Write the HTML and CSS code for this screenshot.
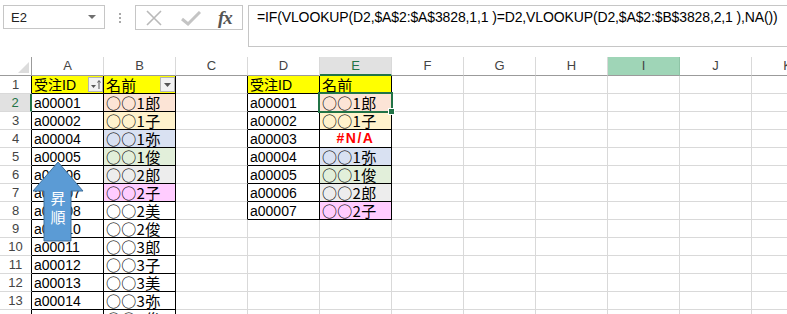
FILE: index.html
```html
<!DOCTYPE html>
<html lang="ja">
<head>
  <meta charset="UTF-8">
  <title>VLOOKUP 昇順</title>
  <link rel="stylesheet" href="styles.css">
</head>
<body>
  <div class="bar">
    <div class="namebox"><span>E2</span><span class="caret"></span></div>
    <div class="grip"><i></i><i></i><i></i></div>
    <div class="fxbox">
      <svg class="ico-x" width="18" height="16" viewBox="0 0 18 16"><path d="M2 1 L16 15 M16 1 L2 15" stroke="#b9b9b9" stroke-width="1.6" fill="none"/></svg>
      <svg class="ico-ok" width="20" height="15" viewBox="0 0 20 15"><path d="M1 8 L7 13 L19 1" stroke="#c4c4c4" stroke-width="3" fill="none"/></svg>
      <span class="fx">fx</span>
    </div>
    <div class="formula">=IF(VLOOKUP(D2,$A$2:$A$3828,1,1 )=D2,VLOOKUP(D2,$A$2:$B$3828,2,1 ),NA())</div>
  </div>

  <div class="sheet" id="sheet">
    <svg class="arrow" width="54" height="84" viewBox="0 0 54 84">
      <path d="M27 2 L52 31 L40 31 L40 81 L13 81 L13 31 L2 31 Z" fill="#5b9bd5" stroke="#41719c" stroke-width="1"/>
      <text x="27" y="37" class="arrow-text">昇</text>
      <text x="27" y="56" class="arrow-text">順</text>
    </svg>
  </div>

  <script>
    const cols = ["A", "B", "C", "D", "E", "F", "G", "H", "I", "J", "K"];

    const left = [
      ["受注ID", "名前", "yel"],
      ["a00001", "○○1郎", "peach"], ["a00002", "○○1子", "cream"], ["a00004", "○○1弥", "blue"],
      ["a00005", "○○1俊", "green"], ["a00006", "○○2郎", "grey"], ["a00007", "○○2子", "pink"],
      ["a00008", "○○2美", ""], ["a00010", "○○2俊", ""], ["a00011", "○○3郎", ""],
      ["a00012", "○○3子", ""], ["a00013", "○○3美", ""], ["a00014", "○○3弥", ""],
      ["a00015", "○○3俊", ""]
    ];

    const right = [
      ["受注ID", "名前", "yel"],
      ["a00001", "○○1郎", "peach"], ["a00002", "○○1子", "cream"], ["a00003", "#N/A", "na"],
      ["a00004", "○○1弥", "blue"], ["a00005", "○○1俊", "green"], ["a00006", "○○2郎", "grey"],
      ["a00007", "○○2子", "pink"]
    ];

    const sheet = document.getElementById("sheet");

    function addCell(text, cls) {
      const el = document.createElement("div");
      el.className = cls;
      if (text) el.textContent = text;
      sheet.appendChild(el);
      return el;
    }

    function filterBtn(sorted) {
      const b = document.createElement("span");
      b.className = "fbtn";
      b.innerHTML = sorted
        ? '<svg width="13" height="13" viewBox="0 0 13 13"><path d="M2 7 L7 7 L4.5 10 Z" fill="#555"/><path d="M10 3 L10 11 M8.5 4.5 L10 2.5 L11.5 4.5" stroke="#555" stroke-width="1" fill="none"/></svg>'
        : '<svg width="13" height="13" viewBox="0 0 13 13"><path d="M3 5 L10 5 L6.5 9 Z" fill="#555"/></svg>';
      return b;
    }

    // header row
    addCell("", "corner");
    cols.forEach(c => {
      let cls = "ch";
      if (c === "E") cls += " sel";
      if (c === "I") cls += " hi";
      addCell(c, cls);
    });

    for (let r = 1; r <= 14; r++) {
      addCell(String(r), r === 2 ? "rh sel" : "rh");

      const L = left[r - 1];
      const a = addCell(L[0], "cell tb id" + (r === 1 ? " yel hd" : ""));
      const b = addCell(L[1], "cell tb name " + L[2] + (r === 1 ? " hd" : ""));
      if (r === 1) {
        a.appendChild(filterBtn(true));
        b.appendChild(filterBtn(false));
      }

      addCell("", r <= 8 ? "cell edge" : "cell");

      const R = right[r - 1];
      if (R) {
        addCell(R[0], "cell tb id" + (r === 1 ? " yel" : ""));
        addCell(R[1], "cell tb name " + R[2] + (r === 2 ? " cur" : ""));
      } else {
        addCell("", "cell");
        addCell("", "cell");
      }

      for (let i = 5; i < cols.length; i++) addCell("", "cell");
    }
  </script>
</body>
</html>
```

FILE: styles.css
```css
html, body {
  margin: 0;
  width: 787px;
  height: 314px;
  overflow: hidden;
  background: #fff;
}
body {
  font-family: "Liberation Sans", "Noto Sans CJK JP", sans-serif;
  color: #000;
}

/* formula bar */
.bar {
  height: 57px;
  box-sizing: border-box;
  padding: 5px 0 0 3px;
  display: flex;
  align-items: flex-start;
}
.namebox {
  width: 102px;
  height: 24px;
  box-sizing: border-box;
  border: 1px solid #c6c6c6;
  display: flex;
  align-items: center;
  justify-content: space-between;
  padding: 0 8px 0 7px;
  font-size: 13px;
  color: #222;
}
.caret {
  width: 0;
  height: 0;
  border-left: 4px solid transparent;
  border-right: 4px solid transparent;
  border-top: 4px solid #6f6f6f;
}
.grip {
  width: 30px;
  display: flex;
  flex-direction: column;
  align-items: center;
  gap: 2px;
  padding-top: 8px;
}
.grip i {
  width: 2px;
  height: 2px;
  background: #a8a8a8;
}
.fxbox {
  width: 108px;
  height: 25px;
  box-sizing: border-box;
  border: 1px solid #c6c6c6;
  display: flex;
  align-items: center;
  padding-left: 9px;
}
.ico-x {
  margin-right: 18px;
}
.ico-ok {
  margin-right: 17px;
  margin-top: 1px;
}
.fx {
  font-family: "Liberation Serif", serif;
  font-style: italic;
  font-weight: bold;
  font-size: 19px;
  color: #555;
  letter-spacing: -1px;
}
.formula {
  flex: 1;
  height: 42px;
  box-sizing: border-box;
  margin-left: 5px;
  border: 1px solid #c6c6c6;
  border-right: none;
  padding: 3px 0 0 8px;
  font-size: 14px;
  letter-spacing: -0.13px;
  white-space: nowrap;
  overflow: hidden;
}

/* sheet grid */
.sheet {
  position: relative;
  display: grid;
  grid-template-columns: 32px repeat(11, 72px);
  grid-template-rows: 19px;
  grid-auto-rows: 18px;
}
.sheet > div {
  box-sizing: border-box;
  white-space: nowrap;
  overflow: hidden;
}
.corner {
  position: relative;
  border-right: 1px solid #9b9b9b;
  border-bottom: 1px solid #9b9b9b;
}
.corner::after {
  content: "";
  position: absolute;
  right: 2px;
  bottom: 2px;
  width: 0;
  height: 0;
  border-left: 11px solid transparent;
  border-bottom: 11px solid #dcdcdc;
}
.ch {
  border-right: 1px solid #d9d9d9;
  border-bottom: 1px solid #9b9b9b;
  text-align: center;
  font-size: 13px;
  line-height: 18px;
  color: #444;
}
.ch.sel {
  background: #e1e1e1;
  color: #217346;
  border-bottom: 2px solid #217346;
}
.ch.hi {
  background: #9fd5b7;
  border-right-color: #8ec4a6;
}
.rh {
  border-right: 1px solid #000;
  border-bottom: 1px solid #d9d9d9;
  text-align: center;
  font-size: 13px;
  line-height: 17px;
  color: #444;
}
.rh.sel {
  background: #e1e1e1;
  color: #217346;
  border-right: 2px solid #217346;
}
.cell {
  border-right: 1px solid #d9d9d9;
  border-bottom: 1px solid #d9d9d9;
  padding: 0 2px;
  font-size: 14px;
  line-height: 18px;
}
.cell.edge {
  border-right-color: #000;
}
.cell.tb {
  border-right-color: #000;
  border-bottom-color: #000;
}
.name {
  font-family: "Noto Sans CJK JP", "Liberation Sans", sans-serif;
  font-size: 15px;
  letter-spacing: 0.3px;
  line-height: 17px;
}
.hd {
  display: flex;
  justify-content: space-between;
  align-items: center;
  padding-right: 0;
}
.fbtn {
  width: 15px;
  height: 15px;
  box-sizing: border-box;
  border: 1px solid #b4b4b4;
  background: #f2f2f2;
  display: flex;
  align-items: center;
  justify-content: center;
}
.yel { background: #ffff00; }
.peach { background: #fce4d6; }
.cream { background: #fff2cc; }
.blue { background: #d9e1f2; }
.green { background: #e2efda; }
.grey { background: #ededed; }
.pink { background: #ffccff; }
.na {
  font-family: "Liberation Sans", sans-serif;
  font-size: 14px;
  font-weight: bold;
  color: #ff0000;
  text-align: center;
  letter-spacing: 1.5px;
}
.cell.cur {
  position: relative;
  overflow: visible;
}
.cur::after {
  content: "";
  position: absolute;
  left: -2px;
  top: -2px;
  right: -2px;
  bottom: -2px;
  border: 2px solid #217346;
}
.cur::before {
  content: "";
  position: absolute;
  right: -4px;
  bottom: -4px;
  width: 5px;
  height: 5px;
  background: #217346;
  border: 1px solid #fff;
  z-index: 1;
}

/* callout arrow */
.arrow {
  position: absolute;
  left: 31px;
  top: 103px;
}
.arrow-text {
  font-family: "Noto Sans CJK JP", sans-serif;
  font-size: 15px;
  fill: #fff;
  text-anchor: middle;
  dominant-baseline: central;
}
```
